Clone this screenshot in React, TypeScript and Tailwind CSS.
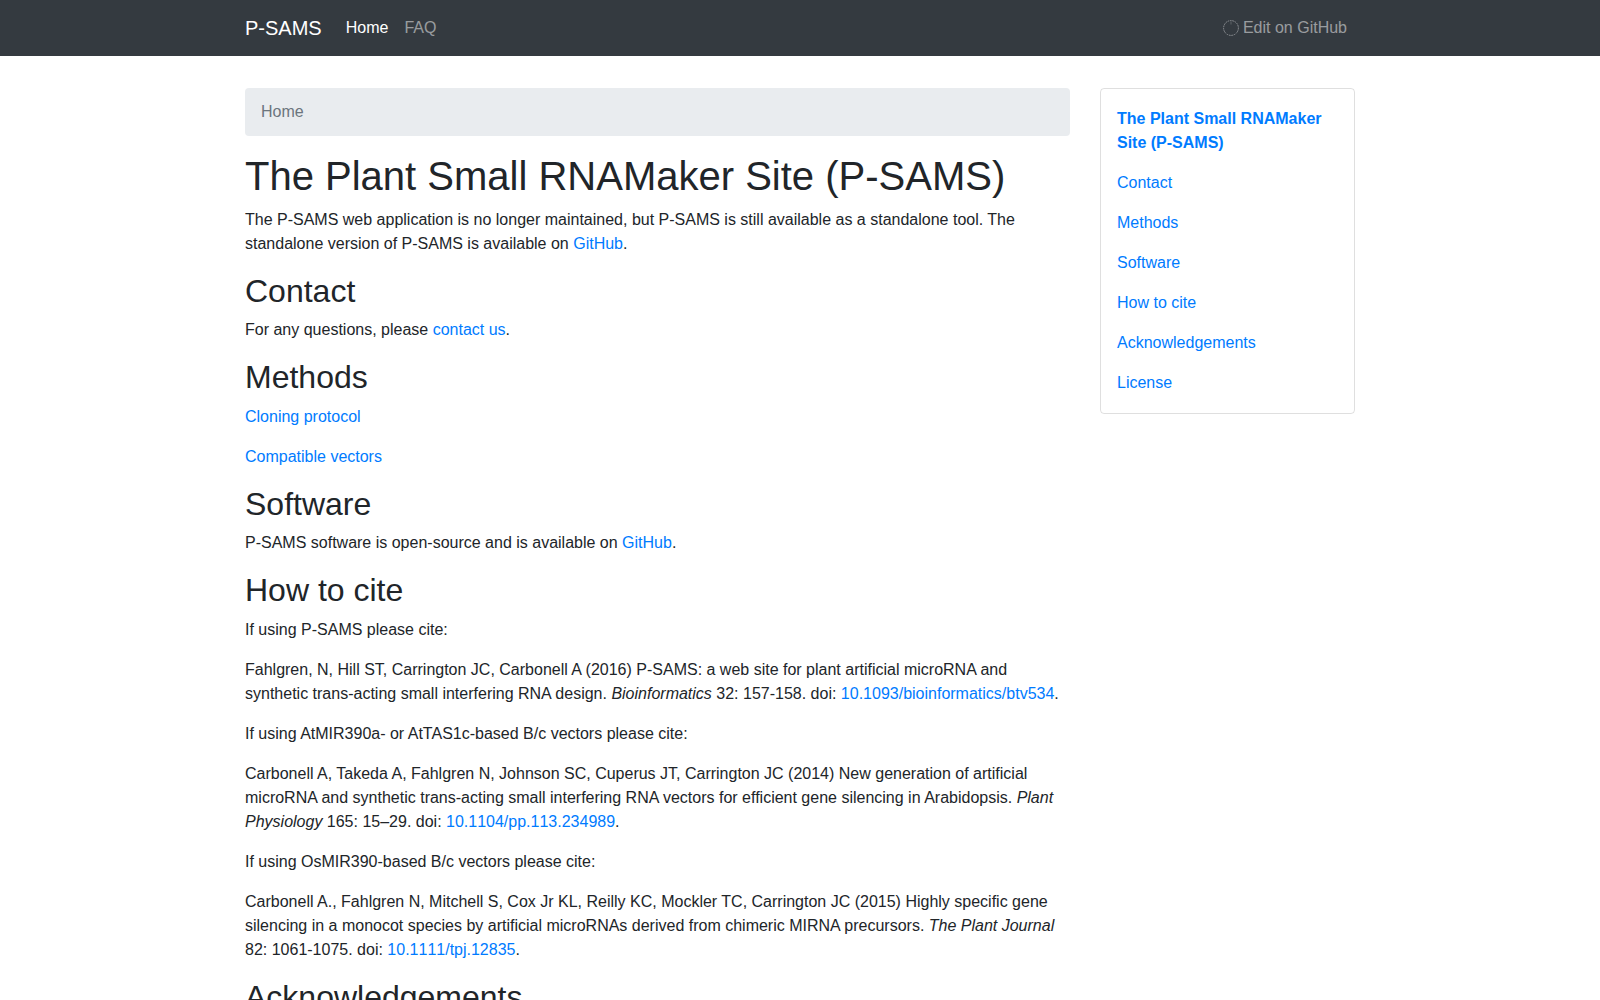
const sideLinks = ["Contact", "Methods", "Software", "How to cite", "Acknowledgements", "License"];

const linkCls = "text-[#007bff] hover:underline";
const h2Cls = "text-[32px] leading-[38.4px] font-medium mb-2 text-[#212529]";

const Link = ({ children }: { children: React.ReactNode }) => (
  <a href="#" className={linkCls}>
    {children}
  </a>
);

// the doi strings sit wider than kerned digits would
const Doi = ({ children }: { children: React.ReactNode }) => (
  <a href="#" className="text-[#007bff] hover:underline [font-kerning:none]">
    {children}
  </a>
);

export default function App() {
  return (
    <div className="h-[1000px] overflow-hidden bg-white text-[#212529] text-base leading-6 font-['Liberation_Sans',Arial,sans-serif]">
      {/* Navbar */}
      <nav className="bg-[#343a40] h-14 py-2">
        <div className="w-[1140px] mx-auto px-[15px] h-10 flex items-center">
          <a href="#" className="text-xl leading-[30px] text-white mr-4">P-SAMS</a>
          <a href="#" className="px-2 text-white">Home</a>
          <a href="#" className="px-2 text-white/50">FAQ</a>
          <a href="#" className="ml-auto px-2 text-white/50 flex items-center gap-1">
            <svg width="16" height="16" viewBox="0 0 16 16" fill="none" aria-hidden="true">
              <circle cx="8" cy="8" r="7.4" stroke="#8f9296" strokeWidth="1" strokeDasharray="1.6 0.8" />
              <path d="M8 1.5V4.5" stroke="#5f6469" strokeWidth="1" />
            </svg>
            Edit on GitHub
          </a>
        </div>
      </nav>

      <div className="w-[1140px] mx-auto flex mt-8">
        {/* Main column */}
        <main className="w-[855px] px-[15px]">
          <div className="bg-[#e9ecef] rounded px-4 py-3 mb-4 text-[#6c757d]">Home</div>

          <h1 className="text-[40px] leading-[48px] font-medium mb-2">The Plant Small RNAMaker Site (P-SAMS)</h1>
          <p className="mb-4">
            The P-SAMS web application is no longer maintained, but P-SAMS is still available as a standalone tool. The standalone version of P-SAMS is available on <Link>GitHub</Link>.
          </p>

          <h2 className={h2Cls}>Contact</h2>
          <p className="mb-4">For any questions, please <Link>contact us</Link>.</p>

          <h2 className={h2Cls}>Methods</h2>
          <p className="mb-4"><Link>Cloning protocol</Link></p>
          <p className="mb-4"><Link>Compatible vectors</Link></p>

          <h2 className={h2Cls}>Software</h2>
          <p className="mb-4">P-SAMS software is open-source and is available on <Link>GitHub</Link>.</p>

          <h2 className={h2Cls}>How to cite</h2>
          <p className="mb-4">If using P-SAMS please cite:</p>
          <p className="mb-4">
            Fahlgren, N, Hill ST, Carrington JC, Carbonell A (2016) P-SAMS: a web site for plant artificial microRNA and synthetic trans-acting small interfering RNA design. <em>Bioinformatics</em> 32: 157-158. doi: <Doi>10.1093/bioinformatics/btv534</Doi>.
          </p>
          <p className="mb-4">If using AtMIR390a- or AtTAS1c-based B/c vectors please cite:</p>
          <p className="mb-4">
            Carbonell A, Takeda A, Fahlgren N, Johnson SC, Cuperus JT, Carrington JC (2014) New generation of artificial microRNA and synthetic trans-acting small interfering RNA vectors for efficient gene silencing in Arabidopsis. <em>Plant Physiology</em> 165: 15–29. doi: <Doi>10.1104/pp.113.234989</Doi>.
          </p>
          <p className="mb-4">If using OsMIR390-based B/c vectors please cite:</p>
          <p className="mb-4">
            Carbonell A., Fahlgren N, Mitchell S, Cox Jr KL, Reilly KC, Mockler TC, Carrington JC (2015) Highly specific gene silencing in a monocot species by artificial microRNAs derived from chimeric MIRNA precursors. <em>The Plant Journal</em> 82: 1061-1075. doi: <Doi>10.1111/tpj.12835</Doi>.
          </p>

          <h2 className={h2Cls}>Acknowledgements</h2>
        </main>

        {/* Sidebar */}
        <aside className="w-[285px] px-[15px]">
          <div className="border border-black/[0.125] rounded px-4 py-[18px] flex flex-col gap-4">
            <a href="#" className="font-bold text-[#007bff]">The Plant Small RNAMaker Site (P-SAMS)</a>
            {sideLinks.map((l) => (
              <a key={l} href="#" className={linkCls}>{l}</a>
            ))}
          </div>
        </aside>
      </div>
    </div>
  );
}
